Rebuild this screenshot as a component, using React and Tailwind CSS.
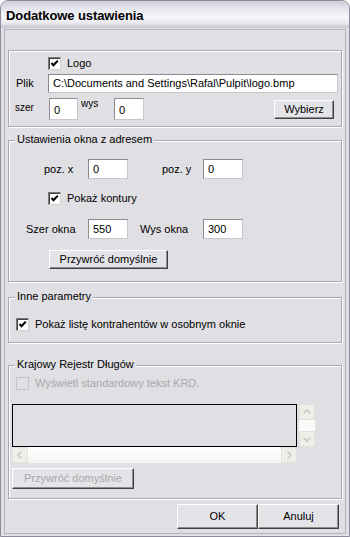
import React from "react";

function Check({ disabled }) {
  if (disabled) {
    return (
      <span className="block w-[13px] h-[13px] shrink-0 box-border border border-[#c4c4c8] bg-[#e0dfe3]" />
    );
  }
  return (
    <span className="block w-[13px] h-[13px] shrink-0 box-border border border-t-[#7a7a7a] border-l-[#7a7a7a] border-b-[#d0d0d0] border-r-[#d0d0d0] bg-white shadow-[inset_1px_1px_0_#404040]">
      <svg width="11" height="11" viewBox="0 0 11 11" className="block">
        <path d="M2.5 5 L4.5 7.2 L8.8 2.6" fill="none" stroke="#000" strokeWidth="2.1" />
      </svg>
    </span>
  );
}

function Field({ value, w, h, pt = "items-center" }) {
  return (
    <div
      className={`box-border flex ${pt} pl-[4px] bg-white border border-t-[#8a8a90] border-l-[#8a8a90] border-b-[#c6c6cc] border-r-[#c6c6cc] whitespace-nowrap overflow-hidden text-[11px]`}
      style={{ width: w, height: h }}
    >
      {value}
    </div>
  );
}

function Btn({ children, w, h, disabled }) {
  return (
    <div
      className={`box-border flex items-center justify-center bg-[#e4e3e8] border border-t-white border-l-white border-b-[#404040] border-r-[#404040] shadow-[inset_-1px_-1px_0_#8c8c8c] whitespace-nowrap ${
        disabled ? "text-[#a8a8a8]" : "text-black"
      }`}
      style={{ width: w, height: h }}
    >
      {children}
    </div>
  );
}

function Group({ title, h, className = "", children }) {
  return (
    <div
      className={`relative box-border border border-[#a8a8b0] shadow-[1px_1px_0_#ffffff,inset_1px_1px_0_#ffffff] ${className}`}
      style={{ height: h }}
    >
      {title && (
        <span className="absolute left-[6px] top-[-7px] px-[2px] bg-[#e0dfe3] whitespace-nowrap">
          {title}
        </span>
      )}
      {children}
    </div>
  );
}

function Arrow({ dir }) {
  const d = {
    up: "M3.5 8.5 L7 5 L10.5 8.5",
    down: "M3.5 5.5 L7 9 L10.5 5.5",
    left: "M8.5 3.5 L5 7 L8.5 10.5",
    right: "M5.5 3.5 L9 7 L5.5 10.5",
  }[dir];
  return (
    <div className="w-[16px] h-[16px] box-border border border-[#e2e2dc] bg-[#efefe9] flex items-center justify-center shrink-0">
      <svg width="14" height="14" viewBox="0 0 14 14">
        <path d={d} fill="none" stroke="#c8c8c0" strokeWidth="1.6" />
      </svg>
    </div>
  );
}

export default function App() {
  return (
    <div className="w-[350px] h-[537px] bg-white font-['Liberation_Sans',Arial,sans-serif] text-[11px] leading-none text-black">
      <div className="w-[350px] h-[537px] box-border flex flex-col rounded-t-[8px] border border-[#8c8c9c] bg-[#e0dfe3] overflow-hidden">
        <div className="h-[27px] shrink-0 flex items-center pl-[5px] bg-[linear-gradient(to_bottom,#cdcdda_0%,#e6e6ee_30%,#f7f7fa_60%,#e8e8ee_82%,#c6c6d2_100%)]">
          <span className="text-[13px] font-bold pt-[2px] tracking-[-0.1px]">Dodatkowe ustawienia</span>
        </div>
        <div className="flex-1 flex px-[3px] pt-[1px] pb-[2px]">
          <div className="flex-1 flex flex-col box-border border border-[#b4b4bc] px-[3px]">
            {/* Group 1 */}
            <Group h={77} className="mt-[20px]">
              <div className="flex items-center mt-[6px] ml-[39px]">
                <Check />
                <span className="ml-[6px]">Logo</span>
              </div>
              <div className="flex items-center mt-[4px]">
                <span className="ml-[7px] w-[32px]">Plik</span>
                <Field value="C:\Documents and Settings\Rafal\Pulpit\logo.bmp" w={290} h={19} />
              </div>
              <div className="flex items-start mt-[5px]">
                <span className="ml-[6px] w-[34px] mt-[5px] text-[10px]">szer</span>
                <Field value="0" w={29} h={22} pt="items-end pb-[3px]" />
                <span className="ml-[3px] w-[33px] text-[10px] mt-[1px]">wys</span>
                <Field value="0" w={30} h={22} pt="items-end pb-[3px]" />
                <div className="ml-[130px] mt-[2px]">
                  <Btn w={60} h={19}>Wybierz</Btn>
                </div>
              </div>
            </Group>

            {/* Group 2 */}
            <Group title="Ustawienia okna z adresem" h={142} className="mt-[13px]">
              <div className="flex items-center mt-[18px]">
                <span className="ml-[35px] w-[44px]">poz. x</span>
                <Field value="0" w={40} h={20} />
                <span className="ml-[34px] w-[41px]">poz. y</span>
                <Field value="0" w={40} h={20} />
              </div>
              <div className="flex items-center mt-[13px] ml-[39px]">
                <Check />
                <span className="ml-[6px]">Pokaż kontury</span>
              </div>
              <div className="flex items-center mt-[14px]">
                <span className="ml-[17px] w-[62px]">Szer okna</span>
                <Field value="550" w={40} h={20} />
                <span className="ml-[12px] w-[63px]">Wys okna</span>
                <Field value="300" w={40} h={20} />
              </div>
              <div className="mt-[11px] ml-[40px]">
                <Btn w={119} h={19}>Przywróć domyślnie</Btn>
              </div>
            </Group>

            {/* Group 3 */}
            <Group title="Inne parametry" h={46} className="mt-[15px]">
              <div className="flex items-center mt-[20px] ml-[7px]">
                <Check />
                <span className="ml-[6px]">Pokaż listę kontrahentów w osobnym oknie</span>
              </div>
            </Group>

            {/* Group 4 */}
            <Group title="Krajowy Rejestr Długów" h={134} className="mt-[22px]">
              <div className="flex items-center mt-[11px] ml-[7px] text-[#a8a8a8]">
                <Check disabled />
                <span className="ml-[6px]">Wyświetl standardowy tekst KRD.</span>
              </div>
              <div className="ml-[3px] mt-[14px]">
                <div className="flex">
                  <div className="w-[285px] h-[43px] box-border border border-black bg-[#e0dfe3]" />
                  <div className="ml-[2px] w-[16px] h-[43px] flex flex-col bg-[#fafafa]">
                    <Arrow dir="up" />
                    <div className="flex-1" />
                    <Arrow dir="down" />
                  </div>
                </div>
                <div className="w-[285px] h-[16px] flex bg-[linear-gradient(to_bottom,#ffffff,#f4f4f2)]">
                  <Arrow dir="left" />
                  <div className="flex-1" />
                  <Arrow dir="right" />
                </div>
              </div>
              <div className="ml-[3px] mt-[5px]">
                <Btn w={122} h={21} disabled>Przywróć domyślnie</Btn>
              </div>
            </Group>

            {/* Buttons */}
            <div className="flex mt-[5px] ml-[169px]">
              <Btn w={81} h={25}>OK</Btn>
              <Btn w={81} h={25}>Anuluj</Btn>
            </div>
          </div>
        </div>
      </div>
    </div>
  );
}
